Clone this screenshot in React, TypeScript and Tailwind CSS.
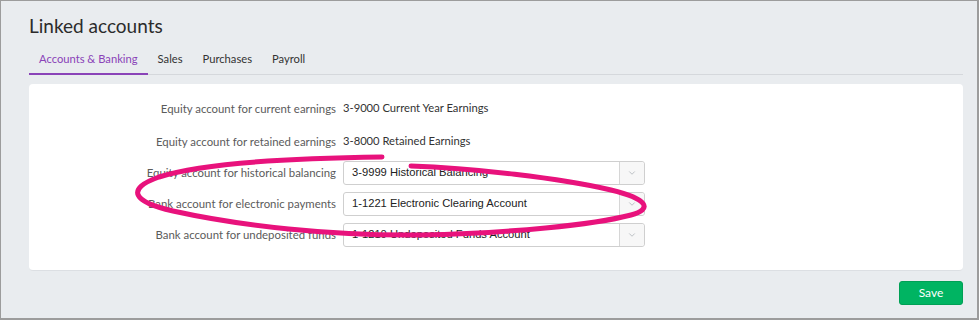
import { ChevronDown } from 'lucide-react'

const ui = "font-['Lato','Open_Sans',sans-serif]"

interface RowProps {
  label: string
  children: React.ReactNode
  className?: string
}

function Row({ label, children, className = '' }: RowProps) {
  return (
    <div className={`flex items-center h-6 ${className}`}>
      <div className="w-[314px] pr-[7px] text-right text-[11.4px] text-[#5b5b5b] whitespace-nowrap">{label}</div>
      <div className="flex-1 text-[11.2px] text-[#333]">{children}</div>
    </div>
  )
}

function Select({ value }: { value: string }) {
  return (
    <div className="flex w-[302px] h-6 border border-[#cfcfcf] rounded-[3px] bg-white">
      <div className="flex-1 flex items-center pl-2 font-['Liberation_Sans',Arial,sans-serif] text-[11.2px] text-[#222]">
        {value}
      </div>
      <div className="w-[25px] flex items-center justify-center border-l border-[#d6d6d6] bg-[#f7f7f7] rounded-r-[3px]">
        <ChevronDown size={10} strokeWidth={1.5} className="text-[#9aa0a6]" />
      </div>
    </div>
  )
}

// hand-drawn highlight around the electronic payments row
function Scribble() {
  return (
    <svg className="absolute left-0 top-0 pointer-events-none" width="979" height="320" viewBox="0 0 979 320">
      <path
        d="M 381 156 C 300 157, 205 161, 158 176 C 124 188, 132 201, 172 210 C 240 225, 330 235, 420 234 C 510 232, 592 224, 630 214 C 652 208, 647 198, 610 189 C 560 177, 470 167, 410 165"
        fill="none"
        stroke="#e8127c"
        strokeWidth="5"
        strokeLinecap="round"
      />
    </svg>
  )
}

export default function App() {
  return (
    <div className={`relative w-[979px] h-[320px] overflow-hidden bg-[#e9ecef] border-t border-l border-r-2 border-b-2 border-[#9c9c9c] pl-[28px] pr-[14px] ${ui}`}>
      <h1 className="mt-[11px] text-[19px] leading-[28px] text-[#2b2b2b]">Linked accounts</h1>
      <div className="mt-[11px] flex border-b border-[#d5d8dc] text-[11.2px] text-[#333]">
        <div className="px-[10px] pb-[5px] text-[#8a43b8] border-b-2 border-[#8a43b8] -mb-px">Accounts &amp; Banking</div>
        <div className="px-[10px] pb-[5px]">Sales</div>
        <div className="px-[10px] pb-[5px]">Purchases</div>
        <div className="px-[10px] pb-[5px]">Payroll</div>
      </div>
      <div className="mt-[9px] bg-white rounded-[4px] border-b border-[#dcdfe3] pt-[13px] pb-[23px] flex flex-col">
        <Row label="Equity account for current earnings">3-9000 Current Year Earnings</Row>
        <Row label="Equity account for retained earnings" className="mt-[9px]">3-8000 Retained Earnings</Row>
        <Row label="Equity account for historical balancing" className="mt-[7px]">
          <Select value="3-9999 Historical Balancing" />
        </Row>
        <Row label="Bank account for electronic payments" className="mt-[7px]">
          <Select value="1-1221 Electronic Clearing Account" />
        </Row>
        <Row label="Bank account for undeposited funds" className="mt-[7px]">
          <Select value="1-1210 Undeposited Funds Account" />
        </Row>
      </div>
      <div className="mt-[10px] flex justify-end">
        <button className="w-16 h-6 rounded-[3px] bg-[#00b462] border border-[#00a055] text-white text-[12px]">Save</button>
      </div>
      <Scribble />
    </div>
  )
}
